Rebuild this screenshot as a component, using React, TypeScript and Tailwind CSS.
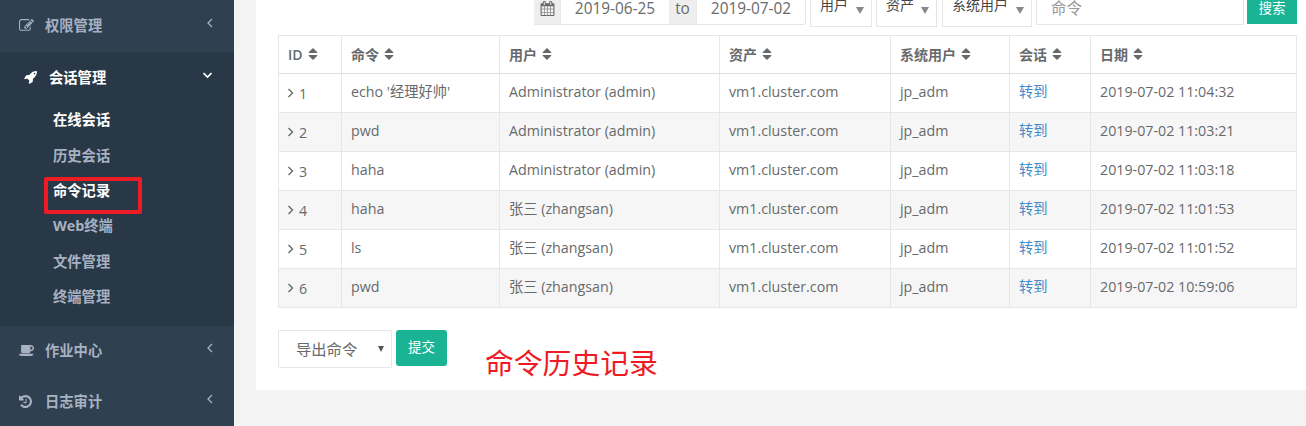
import React from "react";

const icons = {
  edit: {
    box: "0 128 1792 1536",
    d: "M888 1184l116-116-152-152-116 116v56h96v96h56zm440-720q-16-16-33 1l-350 350q-17 17-1 33t33-1l350-350q17-17 1-33zm80 594v190q0 119-84.5 203.5t-203.5 84.5h-832q-119 0-203.5-84.5t-84.5-203.5v-832q0-119 84.5-203.5t203.5-84.5h832q63 0 117 25 15 7 18 23 3 17-9 29l-49 49q-14 14-32 8-23-6-45-6h-832q-66 0-113 47t-47 113v832q0 66 47 113t113 47h832q66 0 113-47t47-113v-126q0-13 9-22l64-64q15-15 35-7t20 29zm-96-738l288 288-672 672h-288v-288zm444 132l-92 92-288-288 92-92q28-28 68-28t68 28l152 152q28 28 28 68t-28 68z",
  },
  rocket: {
    box: "0 128 1664 1664",
    d: "M1440 448q0-40-28-68t-68-28-68 28-28 68 28 68 68 28 68-28 28-68zm224-288q0 249-75.5 430.5t-253.5 360.5q-81 80-195 176l-20 379q-2 16-16 26l-384 224q-7 4-16 4-12 0-23-9l-64-64q-13-14-8-32l85-276-281-281-276 85q-3 1-9 1-14 0-23-9l-64-64q-17-19-5-39l224-384q10-14 26-16l379-20q96-114 176-195 188-187 358-258t431-71q14 0 24 9.5t10 22.5z",
  },
  coffee: {
    box: "0 448 1856 1344",
    d: "M1664 832q0-80-56-136t-136-56h-64v384h64q80 0 136-56t56-136zm-1664 704h1792q0 106-75 181t-181 75h-1280q-106 0-181-75t-75-181zm1856-704q0 159-112.5 271.5t-271.5 112.5h-64v32q0 92-66 158t-158 66h-704q-92 0-158-66t-66-158v-736q0-26 19-45t45-19h1152q159 0 271.5 112.5t112.5 271.5z",
  },
  history: {
    box: "128 128 1536 1536",
    d: "M1664 896q0 156-61 298t-164 245-245 164-298 61q-172 0-327-72.5t-264-204.5q-7-10-6.5-22.5t8.5-20.5l137-138q10-9 25-9 16 2 23 12 73 95 179 147t225 52q104 0 198.5-40.5t163.5-109.5 109.5-163.5 40.5-198.5-40.5-198.5-109.5-163.5-163.5-109.5-198.5-40.5q-98 0-188 35.5t-160 101.5l137 138q31 30 14 69-17 40-59 40h-448q-26 0-45-19t-19-45v-448q0-42 40-59 39-17 69 14l130 129q107-101 244.5-156.5t284.5-55.5q156 0 298 61t245 164 164 245 61 298zm-640-288v448q0 14-9 23t-23 9h-320q-14 0-23-9t-9-23v-64q0-14 9-23t23-9h224v-352q0-14 9-23t23-9h64q14 0 23 9t9 23z",
  },
  calendar: {
    box: "64 0 1664 1792",
    d: "M192 1664h288v-288h-288v288zm352 0h320v-288h-320v288zm-352-352h288v-320h-288v320zm352 0h320v-320h-320v320zm-352-384h288v-288h-288v288zm736 736h320v-288h-320v288zm-384-736h320v-288h-320v288zm768 736h288v-288h-288v288zm-384-352h320v-320h-320v320zm-352-864v-288q0-13-9.5-22.5t-22.5-9.5h-64q-13 0-22.5 9.5t-9.5 22.5v288q0 13 9.5 22.5t22.5 9.5h64q13 0 22.5-9.5t9.5-22.5zm736 864h288v-320h-288v320zm-384-384h320v-288h-320v288zm384 0h288v-288h-288v288zm32-480v-288q0-13-9.5-22.5t-22.5-9.5h-64q-13 0-22.5 9.5t-9.5 22.5v288q0 13 9.5 22.5t22.5 9.5h64q13 0 22.5-9.5t9.5-22.5zm384-64v1280q0 52-38 90t-90 38h-1408q-52 0-90-38t-38-90v-1280q0-52 38-90t90-38h128v-96q0-66 47-113t113-47h64q66 0 113 47t47 113v96h384v-96q0-66 47-113t113-47h64q66 0 113 47t47 113v96h128q52 0 90 38t38 90z",
  },
};

function Icon({ name, className }: { name: keyof typeof icons; className: string }) {
  return (
    <svg viewBox={icons[name].box} fill="currentColor" className={`shrink-0 ${className}`}>
      <path d={icons[name].d} />
    </svg>
  );
}

function Angle({ dir, className }: { dir: "left" | "right" | "down"; className: string }) {
  const d = { left: "M6 1 2 5l4 4", right: "M2.5 1l4 4-4 4", down: "M0.5 3 4.5 7l4-4" }[dir];
  return (
    <svg viewBox="0 0 9 10" fill="none" stroke="currentColor" className={`h-[10px] w-[9px] shrink-0 ${className}`}>
      <path d={d} />
    </svg>
  );
}

function SortIcon() {
  return (
    <svg viewBox="0 0 10 12" fill="currentColor" className="mb-[2px] ml-[5px] h-[12px] w-[10px] shrink-0">
      <path d="M5 0 9.3 4.3Q9.6 5 9 5H1Q.4 5 .7 4.3ZM5 12 .7 7.7Q.4 7 1 7H9q.6 0 .3.7Z" />
    </svg>
  );
}

function MenuHeading({ icon, label, iconClass }: { icon: keyof typeof icons; label: string; iconClass: string }) {
  return (
    <div className="flex h-[51px] items-center">
      <div className="flex w-[45px] pl-[19px]">
        <Icon name={icon} className={iconClass} />
      </div>
      <span className="pt-px">{label}</span>
      <Angle dir="left" className="mr-[19px] mb-[5px] ml-auto stroke-[1.3]" />
    </div>
  );
}

const subItems = [
  { label: "在线会话", active: true },
  { label: "历史会话", active: false },
  { label: "命令记录", active: true, marked: true },
  { label: "Web终端", active: false },
  { label: "文件管理", active: false },
  { label: "终端管理", active: false },
];

function Sidebar() {
  return (
    <nav className="h-full w-[234px] shrink-0 bg-[#2f4050] text-[14.3px] leading-5 font-bold text-[#a7b1c2]">
      <div className="h-[52px]">
        <MenuHeading icon="edit" label="权限管理" iconClass="h-[13px] w-[15px]" />
      </div>
      <div className="h-[274px] bg-[#293846]">
        <div className="flex h-[50px] items-center text-white">
          <div className="flex w-[49px] pl-[24px]">
            <Icon name="rocket" className="h-[13px] w-[13px]" />
          </div>
          <span className="pt-px">会话管理</span>
          <Angle dir="down" className="mr-[22px] mb-[5px] ml-auto stroke-[1.6]" />
        </div>
        <ul>
          {subItems.map((s) => (
            <li key={s.label} className={`relative flex h-[35.4px] items-center pt-px pl-[53px] ${s.active ? "text-white" : ""}`}>
              {s.label}
              {s.marked && <span className="absolute top-[4px] left-[44px] h-[37px] w-[98px] rounded-[2px] border-4 border-[#ed1c24]" />}
            </li>
          ))}
        </ul>
      </div>
      <div className="-mt-px">
        <MenuHeading icon="coffee" label="作业中心" iconClass="h-[11px] w-[15px]" />
        <MenuHeading icon="history" label="日志审计" iconClass="h-[13px] w-[13px]" />
      </div>
    </nav>
  );
}

function FilterSelect({ label, className }: { label: string; className: string }) {
  return (
    <div className={`flex h-[27px] justify-between border border-t-0 border-[#e5e6e7] pl-[9px] text-[14px] leading-[14px] text-[#444] ${className}`}>
      <span className="-mt-[2px]">{label}</span>
      <span className="mt-[7px] mr-[7px] h-0 w-0 border-x-[4.5px] border-t-[7px] border-x-transparent border-t-[#888]" />
    </div>
  );
}

function Filters() {
  return (
    <div className="flex h-[35px] items-start pl-[278px] text-[15.4px] leading-[18px]">
      <div className="flex h-[25px] rounded-br-[3px] border-r border-b border-[#e5e6e7]">
        <div className="flex w-[27px] border-r border-[#e5e6e7] bg-[#eee] pt-px pl-[6px]">
          <Icon name="calendar" className="h-[15px] w-[15px]" />
        </div>
        <div className="w-[108px] text-center">2019-06-25</div>
        <div className="w-[28px] border-r border-[#e5e6e7] bg-[#eee] text-center">to</div>
        <div className="w-[108px] text-center">2019-07-02</div>
      </div>
      <FilterSelect label="用户" className="ml-[4px] w-[62px]" />
      <FilterSelect label="资产" className="ml-[4px] w-[61px]" />
      <FilterSelect label="系统用户" className="ml-[5px] w-[90px]" />
      <div className="ml-[4px] h-[25px] w-[208px] border border-t-0 border-[#e5e6e7] pl-[14px] text-[#999]">命令</div>
      <div className="ml-[3px] h-[24px] w-[50px] bg-[#1ab394] text-center text-[13.5px] leading-[17px] text-white">搜索</div>
    </div>
  );
}

const headers = ["ID", "命令", "用户", "资产", "系统用户", "会话", "日期"];
const rows = [
  ["echo '经理好帅'", "Administrator (admin)", "11:04:32"],
  ["pwd", "Administrator (admin)", "11:03:21"],
  ["haha", "Administrator (admin)", "11:03:18"],
  ["haha", "张三 (zhangsan)", "11:01:53"],
  ["ls", "张三 (zhangsan)", "11:01:52"],
  ["pwd", "张三 (zhangsan)", "10:59:06"],
];
const gridRow = "grid grid-cols-[63px_158px_220px_171px_119px_81px_206px]";
const cell = "flex items-center border-l border-[#e7e7e7] pl-[9px] whitespace-nowrap";

function CommandTable() {
  return (
    <div role="table" className="ml-[22px] w-[1019px] border-t border-r border-[#e7e7e7] text-[14.25px] leading-5">
      <div role="row" className={`${gridRow} h-[38px] border-b border-[#ddd] text-[14px] font-semibold`}>
        {headers.map((h) => (
          <div role="columnheader" key={h} className={cell}>
            {h}
            <SortIcon />
          </div>
        ))}
      </div>
      {rows.map(([command, user, time], i) => (
        <div role="row" key={time} className={`${gridRow} h-[39px] border-b border-[#e7e7e7] ${i % 2 ? "bg-[#f6f6f6]" : ""}`}>
          <div className={cell}>
            <Angle dir="right" className="-ml-[2px] mb-px mr-[4px] stroke-[1.4]" />
            <span className="pt-px">{i + 1}</span>
          </div>
          <div className={`${cell} pb-[3px]`}>{command}</div>
          <div className={`${cell} pb-[3px]`}>{user}</div>
          <div className={`${cell} pb-[3px]`}>vm1.cluster.com</div>
          <div className={`${cell} pb-[3px]`}>jp_adm</div>
          <div className={`${cell} pb-[3px] text-[#428bca]`}>转到</div>
          <div className={`${cell} pb-[3px]`}>2019-07-02 {time}</div>
        </div>
      ))}
    </div>
  );
}

export default function App() {
  return (
    <div className="flex h-[426px] w-[1306px] overflow-hidden bg-[#f3f3f4] font-['Open_Sans','Noto_Sans_CJK_SC',sans-serif] text-[#676a6c]">
      <Sidebar />
      <main className="ml-[22px] h-[390px] w-[1050px] bg-white">
        <Filters />
        <CommandTable />
        <div className="flex items-start pt-[22px] pl-[22px]">
          <div className="flex h-[38px] w-[114px] items-center justify-between rounded-[1px] border border-[#e5e6e7] pr-[7px] pl-[17px] text-[15.3px]">
            <span>导出命令</span>
            <span className="h-0 w-0 border-x-[3px] border-t-[6px] border-x-transparent border-t-[#555]" />
          </div>
          <div className="ml-[4px] h-[36px] w-[51px] rounded-[3px] bg-[#1ab394] text-center text-[13.5px] leading-[34px] text-white">提交</div>
          <div className="mt-[12px] ml-[38px] text-[28.8px] leading-[42px] text-[#ed1c24]">命令历史记录</div>
        </div>
      </main>
    </div>
  );
}
